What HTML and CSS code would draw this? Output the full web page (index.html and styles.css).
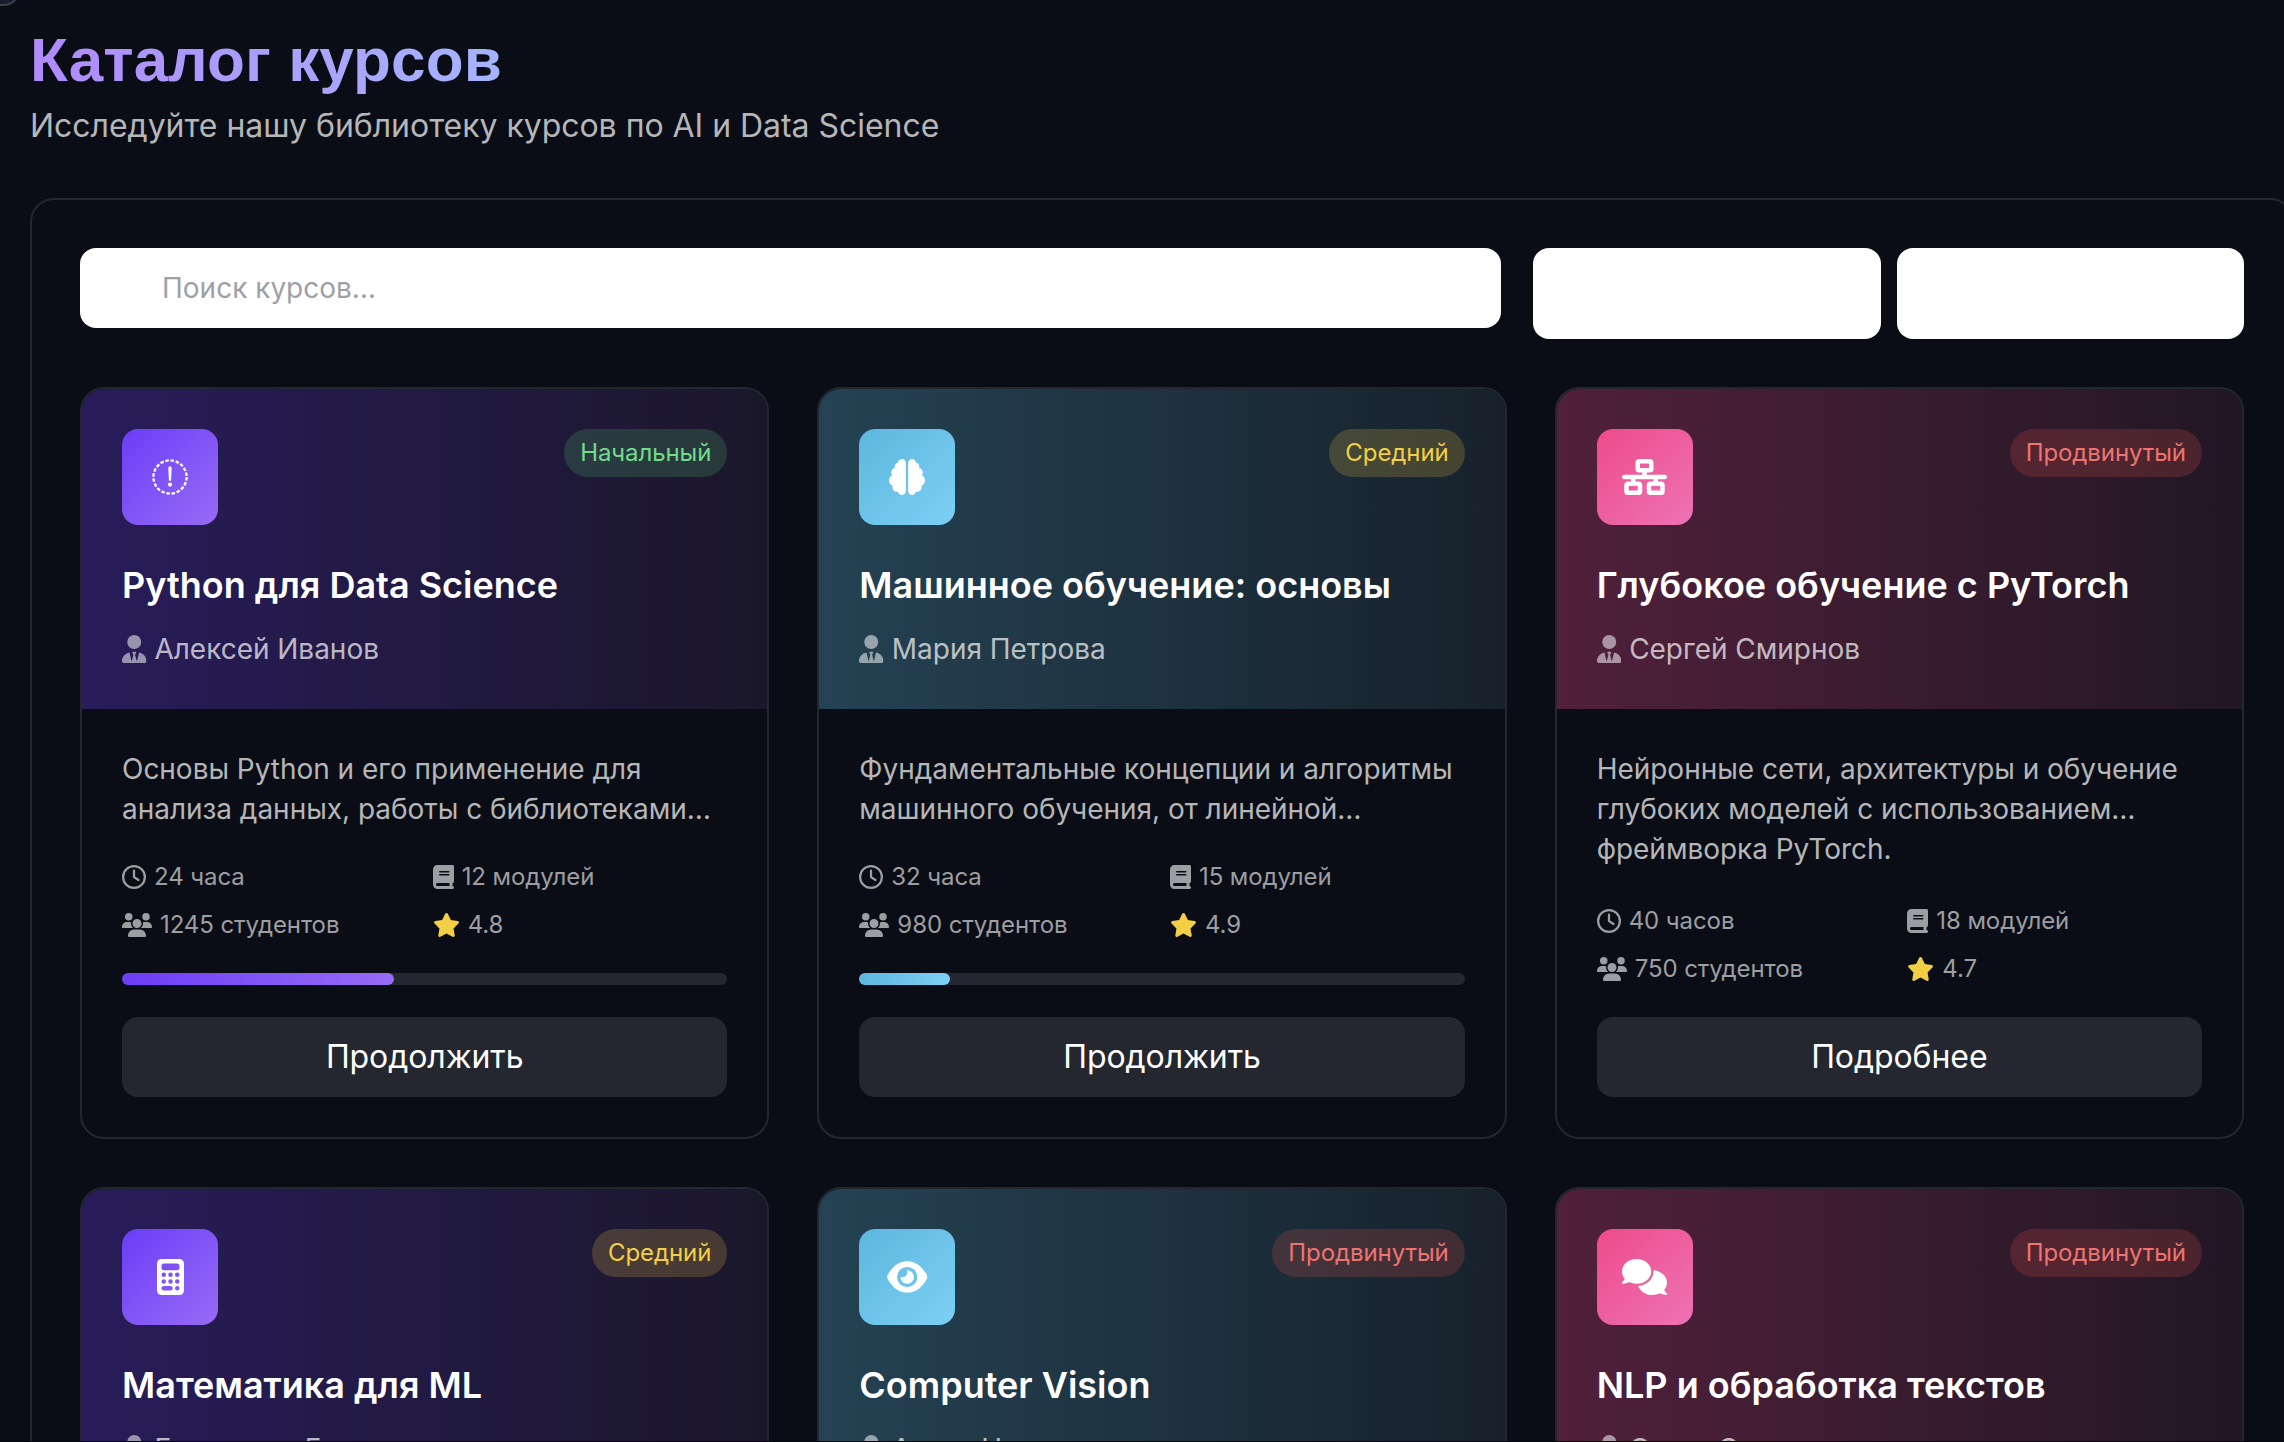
FILE: index.html
```html
<!DOCTYPE html>
<html lang="ru">
<head>
<meta charset="utf-8">
<title>Каталог курсов</title>
<link rel="stylesheet" href="styles.css">
</head>
<body>
<svg class="sprite" aria-hidden="true">
  <symbol id="tie" viewBox="0 0 448 512"><path d="M224 256A128 128 0 1 0 224 0a128 128 0 1 0 0 256zM209.100 359.200l-18.600-31c-6.400-10.700 1.300-24.200 13.700-24.200H224h19.700c12.400 0 20.100 13.600 13.700 24.200l-18.600 31 33.400 123.900 39.500-161.200c77.200 12 136.300 78.800 136.300 159.400c0 17-13.800 30.700-30.700 30.700H265.100 182.900 30.700C13.800 512 0 498.200 0 481.300c0-80.600 59.100-147.400 136.300-159.400l39.500 161.200 33.300-123.900z"/></symbol>
  <symbol id="clock" viewBox="0 0 512 512"><path d="M464 256A208 208 0 1 1 48 256a208 208 0 1 1 416 0zM0 256a256 256 0 1 0 512 0A256 256 0 1 0 0 256zM232 120V256c0 8 4 15.500 10.700 20l96 64c11 7.400 25.900 4.400 33.300-6.700s4.400-25.900-6.700-33.300L280 243.200V120c0-13.300-10.700-24-24-24s-24 10.700-24 24z"/></symbol>
  <symbol id="book" viewBox="0 0 448 512"><path d="M96 0C43 0 0 43 0 96V416c0 53 43 96 96 96H384h32c17.700 0 32-14.300 32-32s-14.300-32-32-32V384c17.700 0 32-14.300 32-32V32c0-17.700-14.300-32-32-32H384 96zm0 384H352v64H96c-17.700 0-32-14.300-32-32s14.300-32 32-32zm32-240c0-8.800 7.200-16 16-16H336c8.800 0 16 7.200 16 16s-7.200 16-16 16H144c-8.800 0-16-7.200-16-16zm16 48H336c8.800 0 16 7.200 16 16s-7.200 16-16 16H144c-8.800 0-16-7.200-16-16s7.200-16 16-16z"/></symbol>
  <symbol id="users" viewBox="0 0 640 512"><path d="M144 0a80 80 0 1 1 0 160A80 80 0 1 1 144 0zM512 0a80 80 0 1 1 0 160A80 80 0 1 1 512 0zM0 298.700C0 239.800 47.800 192 106.700 192h42.700c15.900 0 31 3.500 44.600 9.700c-1.300 7.200-1.900 14.700-1.900 22.300c0 38.200 16.800 72.500 43.300 96H21.300C9.600 320 0 310.400 0 298.700zM405.300 320h-.7c26.600-23.500 43.300-57.800 43.300-96c0-7.600-.7-15-1.900-22.300c13.600-6.300 28.700-9.700 44.600-9.700h42.700C592.200 192 640 239.800 640 298.700c0 11.800-9.600 21.300-21.300 21.300H405.300zM224 224a96 96 0 1 1 192 0 96 96 0 1 1-192 0zM128 485.300C128 411.700 187.700 352 261.300 352H378.700C452.300 352 512 411.700 512 485.300c0 14.700-11.900 26.700-26.700 26.700H154.700c-14.700 0-26.700-11.900-26.700-26.700z"/></symbol>
  <symbol id="star" viewBox="0 0 576 512"><path d="M316.900 18C311.600 7 300.400 0 288.100 0s-23.400 7-28.800 18L195 150.300 51.400 171.500c-12 1.800-22 10.200-25.700 21.700s-.7 24.200 7.900 32.700L137.800 329 113.200 474.700c-2 12 3 24.200 12.900 31.300s23 8 33.800 2.300l128.300-68.500 128.300 68.500c10.800 5.700 23.900 4.900 33.800-2.300s14.900-19.300 12.900-31.300L438.500 329 542.700 225.900c8.600-8.500 11.700-21.200 7.900-32.700s-13.700-19.900-25.700-21.700L381.200 150.300 316.900 18z"/></symbol>
  <symbol id="missing" viewBox="0 0 36 36"><circle cx="18" cy="18" r="16.600" fill="none" stroke="currentColor" stroke-width="2.300" stroke-dasharray="3.500 1.715"/><path d="M16.300 9a1.700 1.700 0 0 1 3.400 0l-.6 12a1.100 1.100 0 0 1-2.200 0z"/><circle cx="18" cy="25.600" r="2.100"/></symbol>
  <symbol id="brain" viewBox="0 0 512 512"><path d="M184 0c30.900 0 56 25.100 56 56V456c0 30.900-25.100 56-56 56c-28.900 0-52.700-21.900-55.700-50.100c-5.200 1.400-10.700 2.100-16.300 2.100c-35.300 0-64-28.700-64-64c0-7.400 1.300-14.600 3.600-21.200C21.400 367.400 0 338.200 0 304c0-31.900 18.700-59.500 45.800-72.300C37.100 220.800 32 207 32 192c0-30.700 21.600-56.300 50.400-62.600C80.800 123.900 80 118 80 112c0-29.900 20.600-55.100 48.300-62.100C131.300 21.900 155.100 0 184 0zM328 0c28.900 0 52.600 21.900 55.700 49.900c27.800 7 48.300 32.100 48.300 62.100c0 6-.8 11.900-2.400 17.400c28.800 6.200 50.400 31.900 50.400 62.600c0 15-5.100 28.800-13.800 39.700C493.300 244.500 512 272.100 512 304c0 34.200-21.400 63.400-51.600 74.800c2.300 6.600 3.600 13.800 3.600 21.200c0 35.300-28.700 64-64 64c-5.600 0-11.100-.7-16.300-2.100c-3 28.200-26.800 50.100-55.700 50.100c-30.900 0-56-25.100-56-56V56c0-30.900 25.100-56 56-56z"/></symbol>
  <symbol id="network" viewBox="0 0 640 512"><path d="M256 64H384v64H256V64zM240 0c-26.500 0-48 21.500-48 48v96c0 26.500 21.500 48 48 48h48v32H32c-17.700 0-32 14.300-32 32s14.300 32 32 32h96v32H80c-26.500 0-48 21.500-48 48v96c0 26.500 21.500 48 48 48H240c26.500 0 48-21.500 48-48V368c0-26.500-21.500-48-48-48H192V288H448v32H400c-26.500 0-48 21.500-48 48v96c0 26.500 21.500 48 48 48H560c26.500 0 48-21.500 48-48V368c0-26.500-21.500-48-48-48H512V288h96c17.700 0 32-14.300 32-32s-14.300-32-32-32H352V192h48c26.500 0 48-21.500 48-48V48c0-26.500-21.500-48-48-48H240zM96 448V384H224v64H96zm320-64H544v64H416V384z"/></symbol>
  <symbol id="calc" viewBox="0 0 384 512"><path d="M64 0C28.700 0 0 28.700 0 64V448c0 35.300 28.700 64 64 64H320c35.300 0 64-28.700 64-64V64c0-35.300-28.700-64-64-64H64zM96 64H288c17.700 0 32 14.300 32 32v32c0 17.700-14.300 32-32 32H96c-17.700 0-32-14.300-32-32V96c0-17.700 14.300-32 32-32zm32 160a32 32 0 1 1-64 0 32 32 0 1 1 64 0zM96 352a32 32 0 1 1 0-64 32 32 0 1 1 0 64zM64 416c0-17.700 14.300-32 32-32h96c17.700 0 32 14.300 32 32s-14.300 32-32 32H96c-17.700 0-32-14.300-32-32zM192 256a32 32 0 1 1 0-64 32 32 0 1 1 0 64zm32 64a32 32 0 1 1-64 0 32 32 0 1 1 64 0zm64-64a32 32 0 1 1 0-64 32 32 0 1 1 0 64zm32 64a32 32 0 1 1-64 0 32 32 0 1 1 64 0zM288 448a32 32 0 1 1 0-64 32 32 0 1 1 0 64z"/></symbol>
  <symbol id="eye" viewBox="0 0 576 512"><path d="M288 32c-80.800 0-145.500 36.800-192.600 80.600C48.600 156 17.300 208 2.500 243.700c-3.300 7.900-3.300 16.700 0 24.600C17.300 304 48.600 356 95.400 399.400C142.500 443.200 207.200 480 288 480s145.500-36.800 192.600-80.600c46.800-43.500 78.100-95.400 93-131.100c3.300-7.900 3.300-16.700 0-24.600c-14.900-35.700-46.200-87.700-93-131.100C433.500 68.800 368.800 32 288 32zM144 256a144 144 0 1 1 288 0 144 144 0 1 1-288 0zm144-64c0 35.300-28.700 64-64 64c-7.100 0-13.900-1.200-20.300-3.300c-5.500-1.800-11.900 1.600-11.700 7.400c.3 6.900 1.300 13.800 3.200 20.700c13.700 51.200 66.400 81.600 117.600 67.900s81.600-66.400 67.900-117.600c-11.100-41.500-47.800-69.400-88.600-71.100c-5.800-.2-9.200 6.100-7.400 11.700c2.100 6.400 3.300 13.200 3.300 20.300z"/></symbol>
  <symbol id="comments" viewBox="0 0 640 512"><path d="M208 352c114.900 0 208-78.800 208-176S322.900 0 208 0S0 78.800 0 176c0 38.600 14.700 74.300 39.600 103.400c-3.500 9.400-8.700 17.700-14.200 24.700c-4.800 6.200-9.700 11-13.300 14.300c-1.800 1.600-3.300 2.900-4.300 3.700c-.5 .4-.9 .7-1.100 .8l-.2 .2C1 327.200-1.400 334.400 .8 340.900S9.100 352 16 352c21.800 0 43.800-5.600 62.100-12.500c9.200-3.500 17.800-7.400 25.200-11.400C134.100 343.300 169.800 352 208 352zM448 176c0 112.300-99.100 196.900-216.500 207C255.800 457.400 336.400 512 432 512c38.200 0 73.900-8.700 104.700-23.900c7.500 4 16 7.900 25.200 11.400c18.300 6.900 40.300 12.500 62.100 12.500c6.900 0 13.100-4.500 15.200-11.100c2.100-6.600-.2-13.800-5.800-17.900l-.2-.2c-.2-.2-.6-.4-1.100-.8c-1-.8-2.500-2-4.300-3.700c-3.600-3.300-8.500-8.100-13.300-14.300c-5.500-7-10.700-15.400-14.200-24.700c24.900-29 39.600-64.700 39.600-103.400c0-92.800-84.900-168.900-192.600-175.500c.4 5.100 .6 10.300 .6 15.500z"/></symbol>
</svg>

<div class="corner-tab"></div>

<header class="page-header">
  <h1 class="page-title">Каталог курсов</h1>
  <p class="page-subtitle">Исследуйте нашу библиотеку курсов по AI и Data Science</p>
</header>

<main class="panel">
  <div class="toolbar">
    <input class="search" type="text" placeholder="Поиск курсов...">
    <div class="filters">
      <div class="filter"></div>
      <div class="filter"></div>
    </div>
  </div>

  <div class="courses">
    <article class="card violet">
      <div class="card-head">
        <div class="card-top">
          <div class="tile"><svg class="i36"><use href="#missing"/></svg></div>
          <span class="badge beginner">Начальный</span>
        </div>
        <h2 class="card-title">Python для Data Science</h2>
        <p class="author"><svg class="tie"><use href="#tie"/></svg>Алексей Иванов</p>
      </div>
      <div class="card-body">
        <p class="desc">Основы Python и его применение для<br>анализа данных, работы с библиотеками…</p>
        <div class="stats">
          <span class="stat"><svg class="i24"><use href="#clock"/></svg>24 часа</span>
          <span class="stat"><svg class="i21"><use href="#book"/></svg>12 модулей</span>
          <span class="stat"><svg class="i30"><use href="#users"/></svg>1245 студентов</span>
          <span class="stat"><svg class="i27"><use href="#star"/></svg>4.8</span>
        </div>
        <div class="progress"><div class="bar" style="width:45%"></div></div>
        <button class="action">Продолжить</button>
      </div>
    </article>

    <article class="card sky">
      <div class="card-head">
        <div class="card-top">
          <div class="tile"><svg class="i36"><use href="#brain"/></svg></div>
          <span class="badge middle">Средний</span>
        </div>
        <h2 class="card-title">Машинное обучение: основы</h2>
        <p class="author"><svg class="tie"><use href="#tie"/></svg>Мария Петрова</p>
      </div>
      <div class="card-body">
        <p class="desc">Фундаментальные концепции и алгоритмы<br>машинного обучения, от линейной…</p>
        <div class="stats">
          <span class="stat"><svg class="i24"><use href="#clock"/></svg>32 часа</span>
          <span class="stat"><svg class="i21"><use href="#book"/></svg>15 модулей</span>
          <span class="stat"><svg class="i30"><use href="#users"/></svg>980 студентов</span>
          <span class="stat"><svg class="i27"><use href="#star"/></svg>4.9</span>
        </div>
        <div class="progress"><div class="bar" style="width:15%"></div></div>
        <button class="action">Продолжить</button>
      </div>
    </article>

    <article class="card pink">
      <div class="card-head">
        <div class="card-top">
          <div class="tile"><svg class="i45"><use href="#network"/></svg></div>
          <span class="badge advanced">Продвинутый</span>
        </div>
        <h2 class="card-title">Глубокое обучение с PyTorch</h2>
        <p class="author"><svg class="tie"><use href="#tie"/></svg>Сергей Смирнов</p>
      </div>
      <div class="card-body">
        <p class="desc">Нейронные сети, архитектуры и обучение<br>глубоких моделей с использованием…<br>фреймворка PyTorch.</p>
        <div class="stats">
          <span class="stat"><svg class="i24"><use href="#clock"/></svg>40 часов</span>
          <span class="stat"><svg class="i21"><use href="#book"/></svg>18 модулей</span>
          <span class="stat"><svg class="i30"><use href="#users"/></svg>750 студентов</span>
          <span class="stat"><svg class="i27"><use href="#star"/></svg>4.7</span>
        </div>
        <button class="action">Подробнее</button>
      </div>
    </article>

    <article class="card violet">
      <div class="card-head">
        <div class="card-top">
          <div class="tile"><svg class="i27x36"><use href="#calc"/></svg></div>
          <span class="badge middle">Средний</span>
        </div>
        <h2 class="card-title">Математика для ML</h2>
        <p class="author"><svg class="tie"><use href="#tie"/></svg>Екатерина Белова</p>
      </div>
      <div class="card-body"></div>
    </article>

    <article class="card sky">
      <div class="card-head">
        <div class="card-top">
          <div class="tile"><svg class="i40"><use href="#eye"/></svg></div>
          <span class="badge advanced">Продвинутый</span>
        </div>
        <h2 class="card-title">Computer Vision</h2>
        <p class="author"><svg class="tie"><use href="#tie"/></svg>Антон Новиков</p>
      </div>
      <div class="card-body"></div>
    </article>

    <article class="card pink">
      <div class="card-head">
        <div class="card-top">
          <div class="tile"><svg class="i45"><use href="#comments"/></svg></div>
          <span class="badge advanced">Продвинутый</span>
        </div>
        <h2 class="card-title">NLP и обработка текстов</h2>
        <p class="author"><svg class="tie"><use href="#tie"/></svg>Ольга Соколова</p>
      </div>
      <div class="card-body"></div>
    </article>
  </div>
</main>
</body>
</html>
```

FILE: styles.css
```css
* { box-sizing: border-box; }

html { overflow: hidden; background: #0a0d15; }

body {
  margin: 0;
  height: 1442px;
  padding: 24px 0 0 30px;
  overflow: hidden;
  border-bottom: 1px solid #08030c;
  background: #0a0d15;
  color: #fff;
  font-family: Inter, "Liberation Sans", sans-serif;
  font-size: 32px;
  line-height: 48px;
  letter-spacing: -.03px;
}

h1, h2, p { margin: 0; }
svg { fill: currentColor; flex: none; height: 24px; }
.sprite { display: none; }

.corner-tab {
  position: absolute;
  top: -34px;
  left: -30px;
  width: 50px;
  height: 40px;
  border: 2px solid #3a404c;
  border-radius: 16px;
  background: #1a1d30;
}

.page-header { height: 174px; }

.page-title {
  width: fit-content;
  font-family: "Liberation Sans", Arial, sans-serif;
  font-size: 62px;
  line-height: 72px;
  font-weight: 700;
  letter-spacing: .1px;
  color: transparent;
  background: linear-gradient(90deg, #b08af9, #a5b4fc);
  background-clip: text;
  -webkit-background-clip: text;
}

.page-subtitle { margin-top: 6px; color: #b5b6b8; white-space: nowrap; }

.panel {
  width: 2264px;
  padding: 48px;
  border: 2px solid #24272f;
  border-radius: 24px;
}

.toolbar {
  display: grid;
  grid-template-columns: 2fr 1fr;
  gap: 32px;
  align-items: start;
  margin-bottom: 48px;
}

.search {
  width: 100%;
  height: 80px;
  padding: 0 32px 0 82px;
  border: 0;
  border-radius: 16px;
  background: #fff;
  font: 400 28px/40px Inter, sans-serif;
}
.search::placeholder { color: #9f9fa9; opacity: 1; }

.filters { display: grid; grid-template-columns: 1fr 1fr; gap: 16px; }
.filter { height: 91px; border-radius: 16px; background: #fff; }

.courses { display: grid; grid-template-columns: repeat(3, 1fr); gap: 48px; }

.card {
  display: flex;
  flex-direction: column;
  height: 752px;
  overflow: hidden;
  border: 2px solid #24272f;
  border-radius: 24px;
}

.violet { --tile: linear-gradient(135deg, #6a3df7, #976cf5); --bar: linear-gradient(90deg, #6a3df7, #976cf5); --head: linear-gradient(90deg, #281c5a, #1b172a); }
.sky { --tile: linear-gradient(135deg, #5db7de, #7dcff5); --bar: linear-gradient(90deg, #5db7de, #7dcff5); --head: linear-gradient(90deg, #244253, #17212b); }
.pink { --tile: linear-gradient(135deg, #ed4b8c, #ee73b3); --head: linear-gradient(90deg, #51203b, #211724); }

.card-head { height: 320px; flex: none; padding: 40px; background: var(--head); }
.card-top { display: flex; justify-content: space-between; align-items: flex-start; margin-bottom: 32px; }

.tile {
  display: flex;
  align-items: center;
  justify-content: center;
  width: 96px;
  height: 96px;
  border-radius: 16px;
  background: var(--tile);
}

.badge { padding: 8px 16px; border-radius: 24px; font-size: 24px; line-height: 32px; letter-spacing: -.08px; }
.beginner { color: #71dd8a; background: rgba(98, 214, 120, .18); }
.middle { color: #f3cf45; background: rgba(243, 200, 69, .2); }
.advanced { color: #ee746f; background: rgba(230, 85, 75, .2); }

.card-title { font-size: 36px; line-height: 56px; font-weight: 600; letter-spacing: 0; white-space: nowrap; }

.author {
  display: flex;
  align-items: center;
  gap: 8px;
  margin-top: 16px;
  font-size: 28px;
  line-height: 40px;
  color: rgba(255, 255, 255, .7);
}
.author svg { width: 24.5px; height: 28px; opacity: .75; }

.card-body { display: flex; flex: 1; flex-direction: column; padding: 40px; }
.desc { flex: 1; margin-bottom: 32px; font-size: 28px; line-height: 40px; color: #b5b6b8; white-space: nowrap; }

.stats { display: grid; grid-template-columns: 1fr 1fr; gap: 16px; margin-bottom: 32px; }
.stat { display: flex; align-items: center; gap: 8px; font-size: 24px; line-height: 32px; letter-spacing: -.08px; color: #9d9ea1; }

.i21 { width: 21px; }
.i24 { width: 24px; }
.i27 { width: 27px; color: #f3cf45; }
.i30 { width: 30px; }
.i36 { width: 36px; height: 36px; }
.i40 { width: 40.5px; height: 36px; }
.i45 { width: 45px; height: 36px; }
.i27x36 { width: 27px; height: 36px; }

.progress { height: 12px; margin-bottom: 32px; border-radius: 6px; background: #24272f; }
.bar { height: 12px; border-radius: 6px; background: var(--bar); }

.action {
  height: 80px;
  padding: 0;
  border: 0;
  border-radius: 16px;
  background: #24272f;
  color: #fff;
  font: 400 32px/48px Inter, sans-serif;
  letter-spacing: -.08px;
}
```
